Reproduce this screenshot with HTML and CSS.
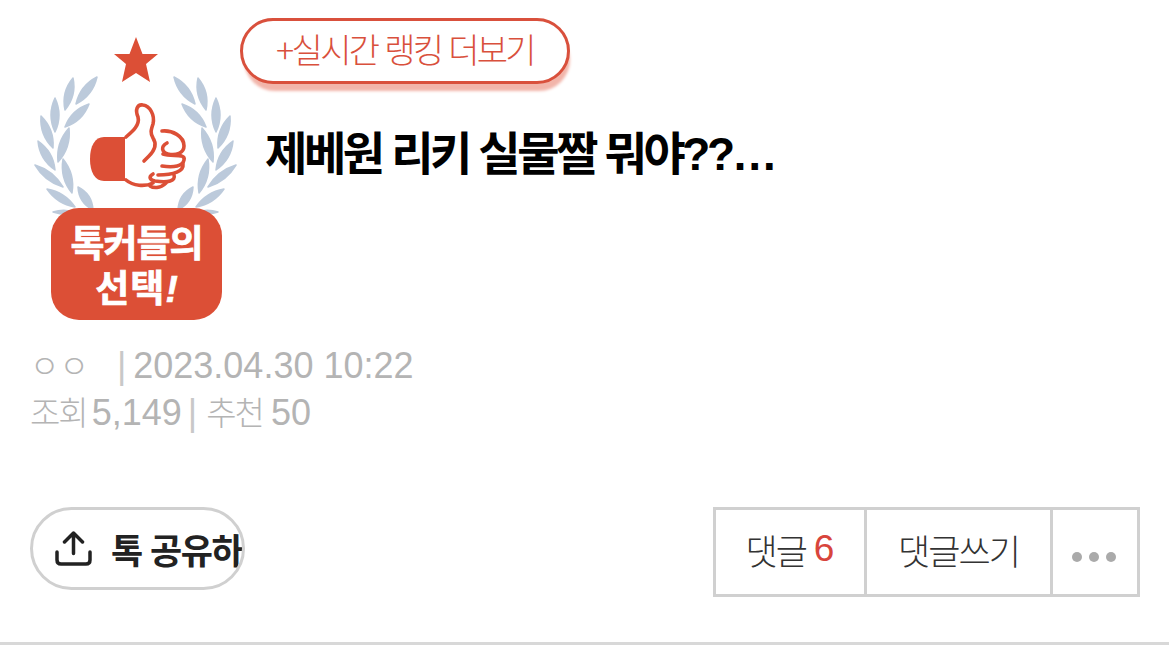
FILE: index.html
```html
<!DOCTYPE html>
<html lang="ko">
<head>
<meta charset="utf-8">
<title>톡 선택</title>
<link rel="stylesheet" href="styles.css">
</head>
<body>
<main class="post">
  <section class="top">
    <svg class="badge" viewBox="30 30 210 295" width="210" height="295" aria-label="톡커들의 선택!">
      <defs>
        <g id="laurel" class="laurel">
          <path d="M97 77Q92.800 95.400 76 104Q80.200 85.600 97 77Z"/>
          <path d="M73 78Q76.800 95.900 65 110Q61.200 92.100 73 78Z"/>
          <path d="M89 104Q82.500 121.300 65 127Q71.500 109.700 89 104Z"/>
          <path d="M55 98Q63 115 55 132Q47 115 55 98Z"/>
          <path d="M69 128Q71.100 147.500 58 162Q55.900 142.500 69 128Z"/>
          <path d="M41 116Q54.500 129.200 53 148Q39.500 134.800 41 116Z"/>
          <path d="M38 141Q53.400 151.500 55 170Q39.600 159.500 38 141Z"/>
          <path d="M63 159Q75.200 174 72 193Q59.800 178 63 159Z"/>
          <path d="M35 165Q53.300 170.500 63 187Q44.700 181.500 35 165Z"/>
          <path d="M78 187Q92.200 194.100 93 210Q78.800 202.900 78 187Z"/>
          <path d="M47 189Q64.800 192.100 75 207Q57.200 203.900 47 189Z"/>
          <path d="M53 212Q65 208 77 213Q65 216 53 212Z"/>
        </g>
      </defs>
      <use href="#laurel"/>
      <use href="#laurel" transform="translate(271 0) scale(-1 1)"/>
      <polygon class="red" points="136,37 142.500,54 158,54 146,64 150,82 136,73 122,82 126,64 114,54 129.500,54"/>
      <path class="red" d="M125 137H104C95 137 90 146 90 159C90 172 95 181 104 181H125Z"/>
      <g class="hand">
        <path d="M126 137C133 131 140 125 138 117C135 110 137 104 143 105C150 106 155 115 153 124C151 130 150 133 153 138C157 144 155 150 149 156L144 161"/>
        <path d="M126 180C133 186 145 187 153 183"/>
        <path d="M162 131C172 130 184 136 184 146C184 153 176 156 168 154C162 152 160 147 167 143"/>
        <path d="M163 154C172 157 186 153 184 160C183 166 174 168 162 166"/>
        <path d="M183 164C184 171 174 175 158 175"/>
        <path d="M174 175C176 181 168 183 155 181C150 180 148 177 153 174"/>
        <path d="M166 183C160 189 153 188 150 186"/>
      </g>
      <rect class="red" x="51" y="208" width="171" height="112" rx="28"/>
      <text class="badge-text"><tspan x="136.500" y="257">톡커들의</tspan><tspan class="badge-second" x="137" y="302">선택<tspan class="bang">!</tspan></tspan></text>
    </svg>
    <div class="head">
      <a class="rank">+실시간 랭킹 더보기</a>
      <h1 class="title">제베원 리키 실물짤 뭐야??…</h1>
    </div>
  </section>

  <section class="meta">
    <p class="meta-line"><span class="nick">ㅇㅇ</span><span class="bar">|</span>2023.04.30 10:22</p>
    <p class="meta-line"><span class="ko">조회</span>5,149<span class="bar2">|</span><span class="ko">추천</span>50</p>
  </section>

  <section class="actions">
    <a class="share">
      <svg class="share-icon" viewBox="54 529 37 35" width="37" height="35" aria-hidden="true">
        <path d="M63.500 540L72.500 531L81.500 540M72.500 531V551.500M56 550V558Q56 562 60 562H85Q89 562 89 558V550"/>
      </svg>
      <span class="share-label">톡 공유하</span>
    </a>
    <div class="tools">
      <a class="tool tool-reply">댓글 <b class="count">6</b></a>
      <a class="tool tool-write">댓글쓰기</a>
      <a class="tool tool-more"><i class="dot"></i><i class="dot"></i><i class="dot"></i></a>
    </div>
  </section>
</main>
</body>
</html>
```
FILE: styles.css
```css
* { box-sizing: border-box; }
html, body { margin: 0; padding: 0; background: #fff; }
body {
  width: 1169px;
  height: 658px;
  overflow: hidden;
  font-family: "Liberation Sans", "Noto Sans CJK KR", sans-serif;
}
p, h1 { margin: 0; }

.post { padding-top: 18px; }

.top { display: flex; padding-left: 30px; height: 315px; }
.badge { display: block; margin-top: 12px; flex: none; }
.red { fill: #dc4f36; }
.laurel { fill: #bccadb; stroke: #bccadb; stroke-width: 1.5; stroke-linejoin: round; }
.hand { fill: none; stroke: #dc4f36; stroke-width: 3.6; stroke-linecap: round; stroke-linejoin: round; }
.badge-text {
  fill: #fff;
  stroke: #fff;
  stroke-width: 0.7px;
  font-family: "Noto Sans CJK KR", sans-serif;
  font-weight: 700;
  font-size: 37px;
  letter-spacing: -1px;
  text-anchor: middle;
}
.badge-second { letter-spacing: 1px; }
.bang { font-style: italic; font-family: "Liberation Sans", sans-serif; font-weight: 700; }

.head { display: flex; flex-direction: column; align-items: flex-start; }
.rank {
  width: 330px;
  height: 66px;
  display: flex;
  align-items: center;
  justify-content: center;
  padding-bottom: 6px;
  border: 3px solid #d9503c;
  border-radius: 33px;
  box-shadow: 2px 9px 3px -2px #f2b5aa;
  color: #d9503c;
  font-family: "Noto Sans CJK KR", sans-serif;
  font-weight: 300;
  font-size: 34px;
  letter-spacing: -2.7px;
  background: #fff;
}
.title {
  margin: 38px 0 0 25px;
  color: #000;
  font-family: "Liberation Sans", "Noto Sans CJK KR", sans-serif;
  font-weight: 700;
  font-size: 46px;
  line-height: 64px;
  letter-spacing: -3.4px;
  white-space: nowrap;
}

.meta { padding: 8px 0 0 30px; color: #b4b4b4; }
.meta-line { font-size: 36px; line-height: 47px; height: 47px; white-space: nowrap; }
.nick { font-family: "Noto Sans CJK KR", sans-serif; font-weight: 300; font-size: 32px; }
.bar { margin: 0 7px 0 28px; color: #c8c8c8; font-weight: 400; }
.bar2 { margin: 0 9px 0 6px; color: #c8c8c8; }
.ko { font-family: "Noto Sans CJK KR", sans-serif; font-weight: 300; font-size: 33px; letter-spacing: -2px; margin-right: 5px; }
.bar2 + .ko { margin-right: 8px; }

.actions {
  display: flex;
  align-items: flex-start;
  justify-content: space-between;
  margin-top: 72px;
  padding: 0 29px 0 30px;
  height: 138px;
  border-bottom: 3px solid #d8d8d8;
}
.share {
  width: 215px;
  height: 83px;
  display: flex;
  align-items: center;
  padding-left: 22px;
  border: 3px solid #d0d0d0;
  border-radius: 42px;
  overflow: hidden;
  color: #222;
}
.share-icon { flex: none; fill: none; stroke: #222; stroke-width: 3.5; stroke-linecap: round; stroke-linejoin: round; }
.share-label {
  margin-left: 19px;
  font-family: "Noto Sans CJK KR", sans-serif;
  font-weight: 700;
  font-size: 35px;
  letter-spacing: -1.5px;
  white-space: nowrap;
}
.tools {
  display: flex;
  height: 90px;
  border: 3px solid #d0d0d0;
  font-family: "Noto Sans CJK KR", sans-serif;
  font-size: 35px;
  color: #333;
  letter-spacing: -2px;
}
.tool { display: flex; align-items: center; justify-content: center; white-space: pre; font-weight: 300; padding-bottom: 6px; }
.tool-reply { width: 151px; border-right: 3px solid #d0d0d0; }
.tool-write { width: 186px; border-right: 3px solid #d0d0d0; }
.tool-more { width: 84px; gap: 7px; padding: 10px 3px 0 0; }
.count { font-family: "Liberation Sans", sans-serif; font-weight: 400; font-size: 37px; color: #d8453c; letter-spacing: 0; }
.dot { width: 10px; height: 10px; border-radius: 50%; background: #aaa; }
```
